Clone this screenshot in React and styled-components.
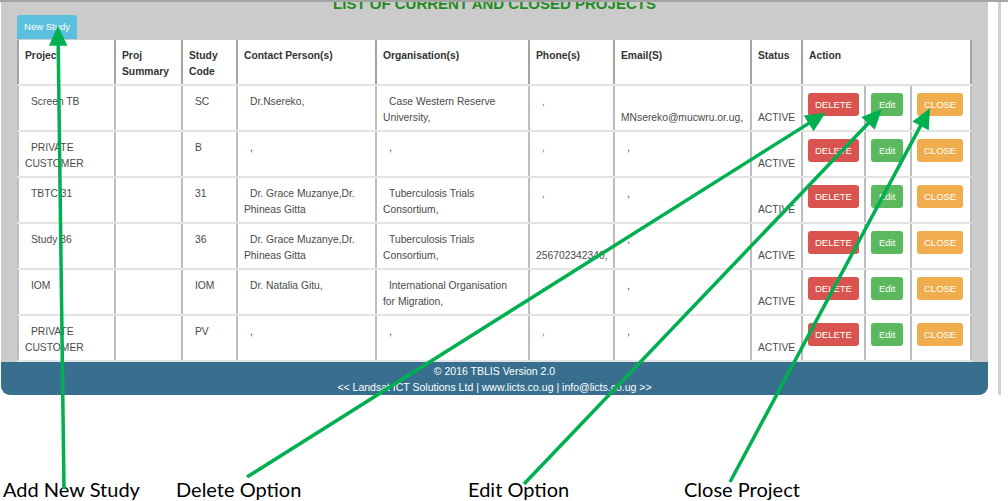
import React from "react";
import styled, { createGlobalStyle } from "styled-components";

const GlobalStyle = createGlobalStyle`
  html, body {
    margin: 0;
    padding: 0;
    background: #fff;
  }
  body {
    font-family: "Liberation Sans", Arial, sans-serif;
  }
`;

const columns = [97, 67, 55, 139, 153, 85, 137, 51, 63, 46, 60];

const contactGrace = "Dr. Grace Muzanye,Dr.\nPhineas Gitta";
const orgTrials = "Tuberculosis Trials\nConsortium,";

const rows = [
	{
		name: "Screen TB",
		code: "SC",
		contact: "Dr.Nsereko,",
		org: "Case Western Reserve\nUniversity,",
		phone: ",",
		email: "MNsereko@mucwru.or.ug,",
		emailLow: true,
	},
	{ name: "PRIVATE\nCUSTOMER", code: "B", contact: ",", org: ",", phone: ",", email: "," },
	{ name: "TBTC 31", code: "31", contact: contactGrace, org: orgTrials, phone: ",", email: "," },
	{
		name: "Study 36",
		code: "36",
		contact: contactGrace,
		org: orgTrials,
		phone: "256702342340,",
		phoneLow: true,
		email: ",",
	},
	{
		name: "IOM",
		code: "IOM",
		contact: "Dr. Natalia Gitu,",
		org: "International Organisation\nfor Migration,",
		phone: ",",
		email: ",",
	},
	{ name: "PRIVATE\nCUSTOMER", code: "PV", contact: ",", org: ",", phone: ",", email: "," },
];

const arrows = [
	{ x1: 64, y1: 487, x2: 58, y2: 28 },
	{ x1: 247, y1: 475, x2: 822, y2: 113 },
	{ x1: 524, y1: 482, x2: 879, y2: 110 },
	{ x1: 730, y1: 480, x2: 928, y2: 110 },
];

const captions = ["Add New Study", "Delete Option", "Edit Option", "Close Project"];

function Arrow({ x1, y1, x2, y2 }) {
	const len = Math.hypot(x2 - x1, y2 - y1);
	const ux = (x2 - x1) / len;
	const uy = (y2 - y1) / len;
	const bx = x2 - ux * 14;
	const by = y2 - uy * 14;
	const points = `${x2},${y2} ${bx - uy * 6.5},${by + ux * 6.5} ${bx + uy * 6.5},${by - ux * 6.5}`;
	return (
		<g>
			<line x1={x1} y1={y1} x2={bx + ux * 3} y2={by + uy * 3} />
			<polygon points={points} />
		</g>
	);
}

export default function App() {
	return (
		<>
			<GlobalStyle />
			<Screen>
				<MainRow>
					<Panel>
						<Content>
							<Title>LIST OF CURRENT AND CLOSED PROJECTS</Title>
							<NewStudy>New Study</NewStudy>
							<Table>
								<colgroup>
									{columns.map((w, i) => (
										<Col key={i} $w={w} />
									))}
								</colgroup>
								<thead>
									<tr>
										<Th>Project</Th>
										<Th>{"Proj\nSummary"}</Th>
										<Th>{"Study\nCode"}</Th>
										<Th>Contact Person(s)</Th>
										<Th>Organisation(s)</Th>
										<Th>Phone(s)</Th>
										<Th>Email(S)</Th>
										<Th>Status</Th>
										<Th colSpan={3}>Action</Th>
									</tr>
								</thead>
								<tbody>
									{rows.map((r, i) => (
										<tr key={i}>
											<Td>{r.name}</Td>
											<Td />
											<Td>{r.code}</Td>
											<Td>{r.contact}</Td>
											<Td>{r.org}</Td>
											<Td $red={r.phone === ","}>
												{r.phoneLow && <br />}
												{r.phone}
											</Td>
											<Td>
												{r.emailLow && <br />}
												{r.email}
											</Td>
											<Td>
												<br />
												ACTIVE
											</Td>
											<ActionTd>
												<Btn $bg="#d9534f">DELETE</Btn>
											</ActionTd>
											<ActionTd>
												<Btn $bg="#5cb85c" $pad={8}>
													Edit
												</Btn>
											</ActionTd>
											<ActionTd>
												<Btn $bg="#f0ad4e">CLOSE</Btn>
											</ActionTd>
										</tr>
									))}
								</tbody>
							</Table>
						</Content>
						<Footer>
							<div>© 2016 TBLIS Version 2.0</div>
							<div>&lt;&lt; Landsat ICT Solutions Ltd | www.licts.co.ug | info@licts.co.ug &gt;&gt;</div>
						</Footer>
					</Panel>
					<ScrollTrack />
				</MainRow>
				<Captions>
					{captions.map((c) => (
						<Caption key={c}>{c}</Caption>
					))}
				</Captions>
				<Overlay viewBox="0 0 1008 501">
					{arrows.map((a, i) => (
						<Arrow key={i} {...a} />
					))}
				</Overlay>
			</Screen>
		</>
	);
}

const Screen = styled.div`
	position: relative;
	width: 1008px;
	height: 501px;
	box-sizing: border-box;
	border-top: 2px solid #a4a4a4;
	display: flex;
	flex-direction: column;
	overflow: hidden;
`;

const MainRow = styled.div`
	display: flex;
	flex-direction: row;
	padding-left: 1px;
`;

const Panel = styled.div`
	width: 987px;
	background: #cbcbcb;
	border-radius: 0 0 9px 9px;
	overflow: hidden;
`;

const Content = styled.div`
	padding: 0 16px;
`;

const Title = styled.h2`
	margin: -6px 0 0;
	font-size: 15px;
	line-height: 15px;
	font-weight: bold;
	text-align: center;
	color: #1f8c22;
`;

const NewStudy = styled.div`
	width: 60px;
	height: 24px;
	margin-top: 4px;
	margin-bottom: 1px;
	background: #5bc0de;
	border-radius: 3px 3px 0 0;
	color: #fff;
	font-size: 9.5px;
	line-height: 24px;
	text-align: center;
`;

const Table = styled.table`
	width: 953px;
	table-layout: fixed;
	border-collapse: collapse;
	background: #fff;
	font-size: 10.3px;
	line-height: 15.5px;
`;

const Col = styled.col`
	width: ${(p) => p.$w}px;
`;

const Th = styled.th`
	height: 45px;
	box-sizing: border-box;
	padding: 8px 6px 0;
	text-align: left;
	vertical-align: top;
	font-weight: bold;
	color: #333;
	white-space: pre-line;
	border-left: 2px solid #a3a3a3;
	border-right: 2px solid #a3a3a3;
	border-bottom: 2px solid #e3e3e3;
`;

const Td = styled.td`
	height: 46px;
	box-sizing: border-box;
	padding: 8px 6px 0;
	text-align: left;
	vertical-align: top;
	color: ${(p) => (p.$red ? "#d2505a" : "#4a4a4a")};
	white-space: pre-line;
	text-indent: 6px;
	border-left: 2px solid #bdbdbd;
	border-right: 2px solid #bdbdbd;
	border-bottom: 2px solid #e3e3e3;
`;

const ActionTd = styled(Td)`
	text-indent: 0;
	padding-left: 5px;
	padding-top: 7px;
`;

const Btn = styled.span`
	display: inline-block;
	height: 23px;
	padding: 0 ${(p) => p.$pad || 7}px;
	border-radius: 3px;
	background: ${(p) => p.$bg};
	color: #fff;
	font-size: 9.5px;
	line-height: 23px;
`;

const Footer = styled.div`
	height: 33px;
	box-sizing: border-box;
	padding-top: 1px;
	background: #386f8e;
	color: #fff;
	font-size: 10.5px;
	line-height: 16px;
	text-align: center;
`;

const ScrollTrack = styled.div`
	width: 3px;
	margin-left: 10px;
	background: #d2d2d2;
`;

const Captions = styled.div`
	margin-top: auto;
	display: grid;
	grid-template-columns: 173px 292px 216px 1fr;
	padding: 0 0 1px 3px;
	font-family: Lato, "Open Sans", sans-serif;
	font-size: 20px;
	line-height: 22px;
	color: #000;
`;

const Caption = styled.div``;

const Overlay = styled.svg`
	position: absolute;
	left: 0;
	top: 0;
	width: 1008px;
	height: 501px;
	pointer-events: none;
	stroke: #00b050;
	stroke-width: 3.5;
	fill: #00b050;
`;
